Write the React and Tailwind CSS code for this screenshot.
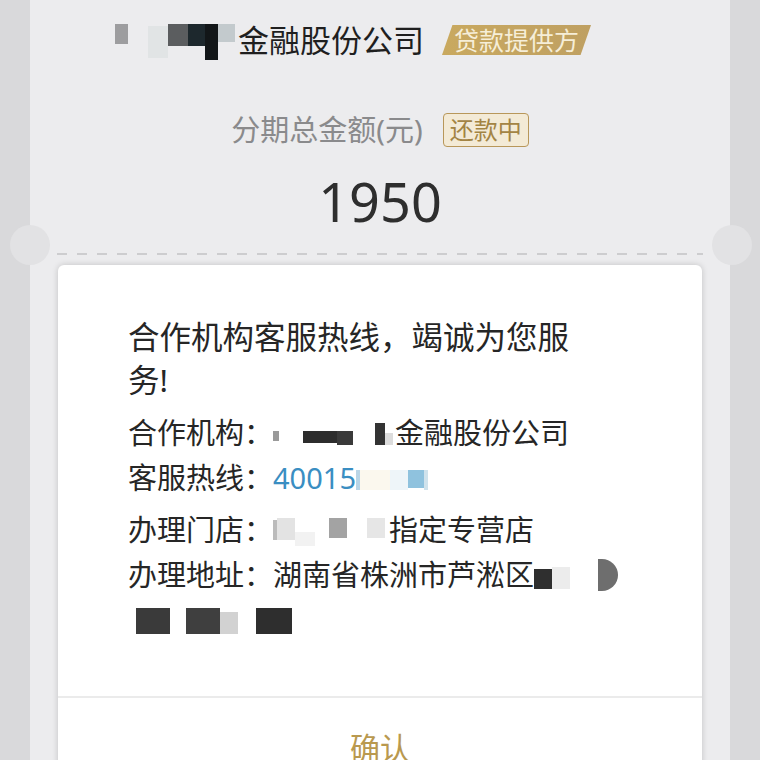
import React from "react";

const font = "font-['Noto_Sans','Noto_Sans_CJK_SC',sans-serif]";

function Mosaic({ blocks, h = "h-[28px]" }) {
  return (
    <span className={`inline-flex items-start align-middle ${h}`}>
      {blocks.map((b, i) => (
        <span key={i} className={`inline-block ${b}`} />
      ))}
    </span>
  );
}

function Row({ label, children, className = "" }) {
  return (
    <div className={`flex items-center h-[45px] whitespace-nowrap ${className}`}>
      <span>{label}：</span>
      {children}
    </div>
  );
}

export default function App() {
  return (
    <div className={`w-[760px] h-[760px] overflow-hidden bg-[#d9d9db] ${font}`}>
      <div className="relative mx-[30px] h-full bg-[#ececee]">
        {/* notches */}
        <div className="absolute left-[-20px] top-[225px] w-[40px] h-[40px] rounded-full bg-[#e2e2e4]" />
        <div className="absolute right-[-22px] top-[225px] w-[40px] h-[40px] rounded-full bg-[#e2e2e4]" />

        {/* lender */}
        <div className="flex items-center h-[80px] pl-[85px]">
          <Mosaic
            h="h-[40px]"
            blocks={[
              "w-[13px] h-[20px] mt-[4px] bg-[#9d9d9f]",
              "w-[20px] h-[10px] bg-transparent",
              "w-[20px] h-[32px] mt-[6px] bg-[#e1e4e5]",
              "w-[20px] h-[22px] mt-[4px] bg-[#5b5d5f]",
              "w-[17px] h-[22px] mt-[4px] bg-[#1d282d]",
              "w-[13px] h-[36px] mt-[4px] bg-[#121618]",
              "w-[17px] h-[18px] mt-[4px] bg-[#c3cacd]",
            ]}
          />
          <span className="ml-[3px] text-[31px] text-[#1f1f1f] leading-none">金融股份公司</span>
          <span className="ml-[18px] h-[30px] px-[12px] flex items-center text-[25px] leading-none text-[#f6eed8] bg-[linear-gradient(90deg,#c9a95f,#bfa062)] [clip-path:polygon(7%_0,100%_0,93%_100%,0_100%)]">
            贷款提供方
          </span>
        </div>

        {/* amount */}
        <div className="mt-[30px] h-[40px] flex items-center justify-center">
          <span className="text-[29px] text-[#8a8a8c]">分期总金额(元)</span>
          <span className="ml-[20px] h-[34px] px-[6px] flex items-center border-[1.5px] border-[#b8975a] rounded-[4px] bg-[#f3ead6] text-[24px] leading-none text-[#a38444]">
            还款中
          </span>
        </div>
        <div className="mt-[16px] h-[70px] flex items-center justify-center text-[54px] text-[#2e2e2e] leading-none">
          1950
        </div>

        {/* dashed */}
        <div className="mt-[17px] mx-[27px] h-[2px] bg-[repeating-linear-gradient(90deg,#cdcdcf_0_10px,transparent_10px_20px)]" />

        {/* dialog */}
        <div className="mt-[10px] mx-[28px] bg-white rounded-t-[6px] shadow-[0_0_6px_rgba(0,0,0,0.18)]">
          <div className="pt-[50px] pb-[54px] pl-[70px] pr-[40px] text-[#262626]">
            <div className="w-[460px] text-[31.5px] leading-[43px]">
              合作机构客服热线，竭诚为您服务!
            </div>
            <div className="mt-[9px] text-[29px]">
              <Row label="合作机构">
                <Mosaic
                  blocks={[
                    "w-[6px] h-[10px] mt-[12px] bg-[#9a9a9a]",
                    "w-[24px] h-[10px] bg-white",
                    "w-[34px] h-[12px] mt-[12px] bg-[#2d2d2d]",
                    "w-[16px] h-[14px] mt-[12px] bg-[#3a3a3a]",
                    "w-[22px] h-[10px] bg-white",
                    "w-[10px] h-[22px] mt-[4px] bg-[#333]",
                    "w-[8px] h-[12px] mt-[14px] bg-[#dcdcdc]",
                  ]}
                />
                <span className="ml-[2px]">金融股份公司</span>
              </Row>
              <Row label="客服热线">
                <span className="text-[#3a8ec2]">40015</span>
                <Mosaic
                  blocks={[
                    "w-[4px] h-[20px] mt-[6px] bg-[#b9d5e6]",
                    "w-[30px] h-[20px] mt-[6px] bg-[#fbf8ee]",
                    "w-[18px] h-[20px] mt-[6px] bg-[#eef5f9]",
                    "w-[16px] h-[18px] mt-[6px] bg-[#8fc2de]",
                    "w-[4px] h-[20px] mt-[6px] bg-[#cfe2ec]",
                  ]}
                />
              </Row>
              <Row label="办理门店" className="mt-[7px]">
                <Mosaic
                  blocks={[
                    "w-[4px] h-[20px] mt-[4px] bg-[#bbb]",
                    "w-[18px] h-[22px] mt-[2px] bg-[#e3e3e3]",
                    "w-[20px] h-[14px] mt-[16px] bg-[#f2f2f2]",
                    "w-[14px] h-[10px] bg-white",
                    "w-[18px] h-[20px] mt-[2px] bg-[#a3a3a3]",
                    "w-[20px] h-[10px] bg-white",
                    "w-[18px] h-[20px] mt-[2px] bg-[#e6e6e6]",
                  ]}
                />
                <span className="ml-[4px]">指定专营店</span>
              </Row>
              <Row label="办理地址">
                <span>湖南省株洲市芦淞区</span>
                <Mosaic
                  h="h-[32px]"
                  blocks={[
                    "w-[18px] h-[20px] mt-[10px] bg-[#2f2f2f]",
                    "w-[18px] h-[22px] mt-[8px] bg-[#ececec]",
                    "w-[28px] h-[10px] bg-white",
                    "w-[20px] h-[32px] bg-[#6e6e6e] rounded-r-full",
                  ]}
                />
              </Row>
              <div className="h-[45px] flex items-center">
                <Mosaic
                  blocks={[
                    "w-[8px] h-[10px] bg-white",
                    "w-[34px] h-[26px] mt-[2px] bg-[#3a3a3a]",
                    "w-[16px] h-[10px] bg-white",
                    "w-[34px] h-[26px] mt-[2px] bg-[#3f3f3f]",
                    "w-[18px] h-[22px] mt-[6px] bg-[#d2d2d2]",
                    "w-[18px] h-[10px] bg-white",
                    "w-[36px] h-[26px] mt-[2px] bg-[#2e2e2e]",
                  ]}
                />
              </div>
            </div>
          </div>
          <div className="h-[100px] border-t-2 border-[#ebebeb] flex items-center justify-center text-[30px] text-[#b9994f]">
            确认
          </div>
        </div>
      </div>
    </div>
  );
}
